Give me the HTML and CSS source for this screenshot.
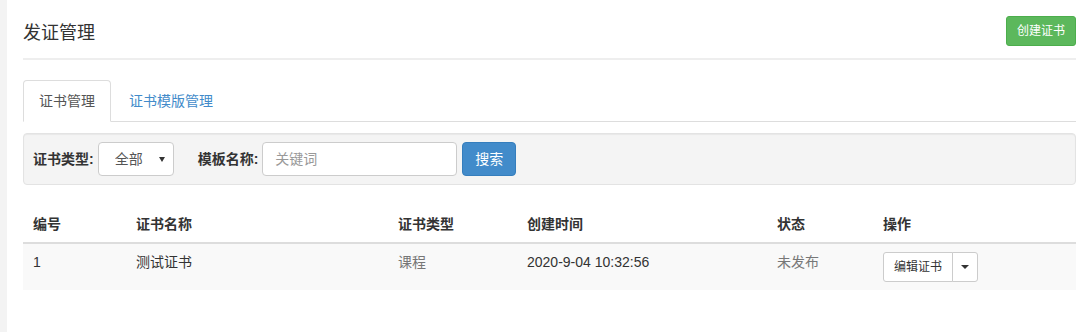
FILE: index.html
```html
<!DOCTYPE html>
<html lang="zh-CN">
<head>
<meta charset="utf-8">
<title>发证管理</title>
<link rel="stylesheet" href="styles.css">
</head>
<body>
<div class="layout">
  <div class="side"></div>
  <main class="main">
    <div class="page-header">
      <h1 class="title">发证管理</h1>
      <button class="btn btn-success btn-sm">创建证书</button>
    </div>
    <ul class="tabs">
      <li class="tab active"><a>证书管理</a></li>
      <li class="tab"><a>证书模版管理</a></li>
    </ul>
    <div class="well">
      <label class="lbl">证书类型:</label>
      <span class="select-wrap">
        <select class="select"><option>全部</option></select>
      </span>
      <label class="lbl lbl2">模板名称:</label>
      <input class="input" type="text" placeholder="关键词">
      <button class="btn btn-primary">搜索</button>
    </div>
    <table class="table">
      <thead>
        <tr>
          <th class="c1">编号</th>
          <th class="c2">证书名称</th>
          <th class="c3">证书类型</th>
          <th class="c4">创建时间</th>
          <th class="c5">状态</th>
          <th class="c6">操作</th>
        </tr>
      </thead>
      <tbody>
        <tr>
          <td>1</td>
          <td>测试证书</td>
          <td class="muted">课程</td>
          <td>2020-9-04 10:32:56</td>
          <td class="muted">未发布</td>
          <td>
            <div class="btn-group">
              <button class="btn btn-default btn-sm">编辑证书</button>
              <button class="btn btn-default btn-sm btn-caret"><span class="caret"></span></button>
            </div>
          </td>
        </tr>
      </tbody>
    </table>
  </main>
</div>
</body>
</html>
```

FILE: styles.css
```css
* { box-sizing: border-box; }
html, body { margin: 0; padding: 0; background: #fff; }
body {
  font-family: "Liberation Sans", "Noto Sans CJK SC", sans-serif;
  font-size: 14px;
  line-height: 20px;
  color: #333;
}
.layout { display: flex; min-height: 332px; }
.side { width: 7px; background: #f3f3f3; flex: none; }
.main { flex: 1; padding: 0 16px; }

.page-header {
  display: flex;
  justify-content: space-between;
  align-items: center;
  padding: 16px 0 12px;
  border-bottom: 2px solid #eee;
}
.title {
  margin: 4px 0 0;
  font-size: 18px;
  font-weight: normal;
  line-height: 22px;
  color: #333;
}

.btn {
  display: inline-block;
  font-family: inherit;
  font-size: 14px;
  line-height: 20px;
  padding: 6px 12px;
  border: 1px solid transparent;
  border-radius: 4px;
  cursor: pointer;
  white-space: nowrap;
}
.btn-sm { font-size: 12px; line-height: 18px; padding: 5px 10px; border-radius: 3px; }
.btn-success { background: #5cb85c; border-color: #4cae4c; color: #fff; }
.btn-primary { background: #428bca; border-color: #357ebd; color: #fff; }
.btn-default { background: #fff; border-color: #ccc; color: #333; }

.tabs {
  list-style: none;
  margin: 20px 0 0;
  padding: 0;
  display: flex;
  border-bottom: 1px solid #ddd;
}
.tab { margin-right: 2px; margin-bottom: -1px; }
.tab a {
  display: block;
  padding: 10px 15px;
  line-height: 20px;
  border: 1px solid transparent;
  border-radius: 4px 4px 0 0;
  color: #428bca;
}
.tab.active a {
  color: #555;
  background: #fff;
  border-color: #ddd #ddd transparent;
}

.well {
  margin-top: 11px;
  display: flex;
  align-items: center;
  padding: 8px 9px;
  background: #f4f4f4;
  border: 1px solid #e3e3e3;
  border-radius: 4px;
  box-shadow: inset 0 1px 1px rgba(0,0,0,0.05);
}
.lbl { font-weight: bold; margin-right: 4px; }
.lbl2 { margin-left: 24px; margin-right: 4px; }
.select-wrap { position: relative; display: inline-block; }
.select-wrap::after {
  content: "";
  position: absolute;
  right: 9px;
  top: 15px;
  border-top: 5px solid #333;
  border-left: 3px solid transparent;
  border-right: 3px solid transparent;
  pointer-events: none;
}
.select {
  -webkit-appearance: none;
  appearance: none;
  width: 76px;
  height: 34px;
  padding: 6px 12px 6px 16px;
  font-family: inherit;
  font-size: 14px;
  color: #555;
  background: #fff;
  border: 1px solid #ccc;
  border-radius: 4px;
}
.input {
  width: 195px;
  height: 34px;
  padding: 6px 12px;
  font-family: inherit;
  font-size: 14px;
  color: #555;
  background: #fff;
  border: 1px solid #ccc;
  border-radius: 4px;
  margin-right: 5px;
}
.input::placeholder { color: #999; }

.table {
  width: 100%;
  margin-top: 21px;
  border-collapse: collapse;
  border-spacing: 0;
}
.table th, .table td {
  text-align: left;
  padding: 8px 10px;
  line-height: 20px;
}
.table th {
  font-weight: bold;
  vertical-align: bottom;
  border-bottom: 2px solid #ddd;
}
.table td { vertical-align: top; background: #f9f9f9; }
.c1 { width: 103px; }
.c2 { width: 262px; }
.c3 { width: 129px; }
.c4 { width: 250px; }
.c5 { width: 106px; }
.muted { color: #777; }

.btn-group { display: inline-flex; }
.btn-group .btn:first-child { border-radius: 3px 0 0 3px; }
.btn-group .btn-caret {
  border-radius: 0 3px 3px 0;
  margin-left: -1px;
  padding: 5px 8px;
  display: inline-flex;
  align-items: center;
}
.caret {
  display: inline-block;
  width: 0;
  height: 0;
  border-top: 4px solid #333;
  border-left: 4px solid transparent;
  border-right: 4px solid transparent;
}
```
